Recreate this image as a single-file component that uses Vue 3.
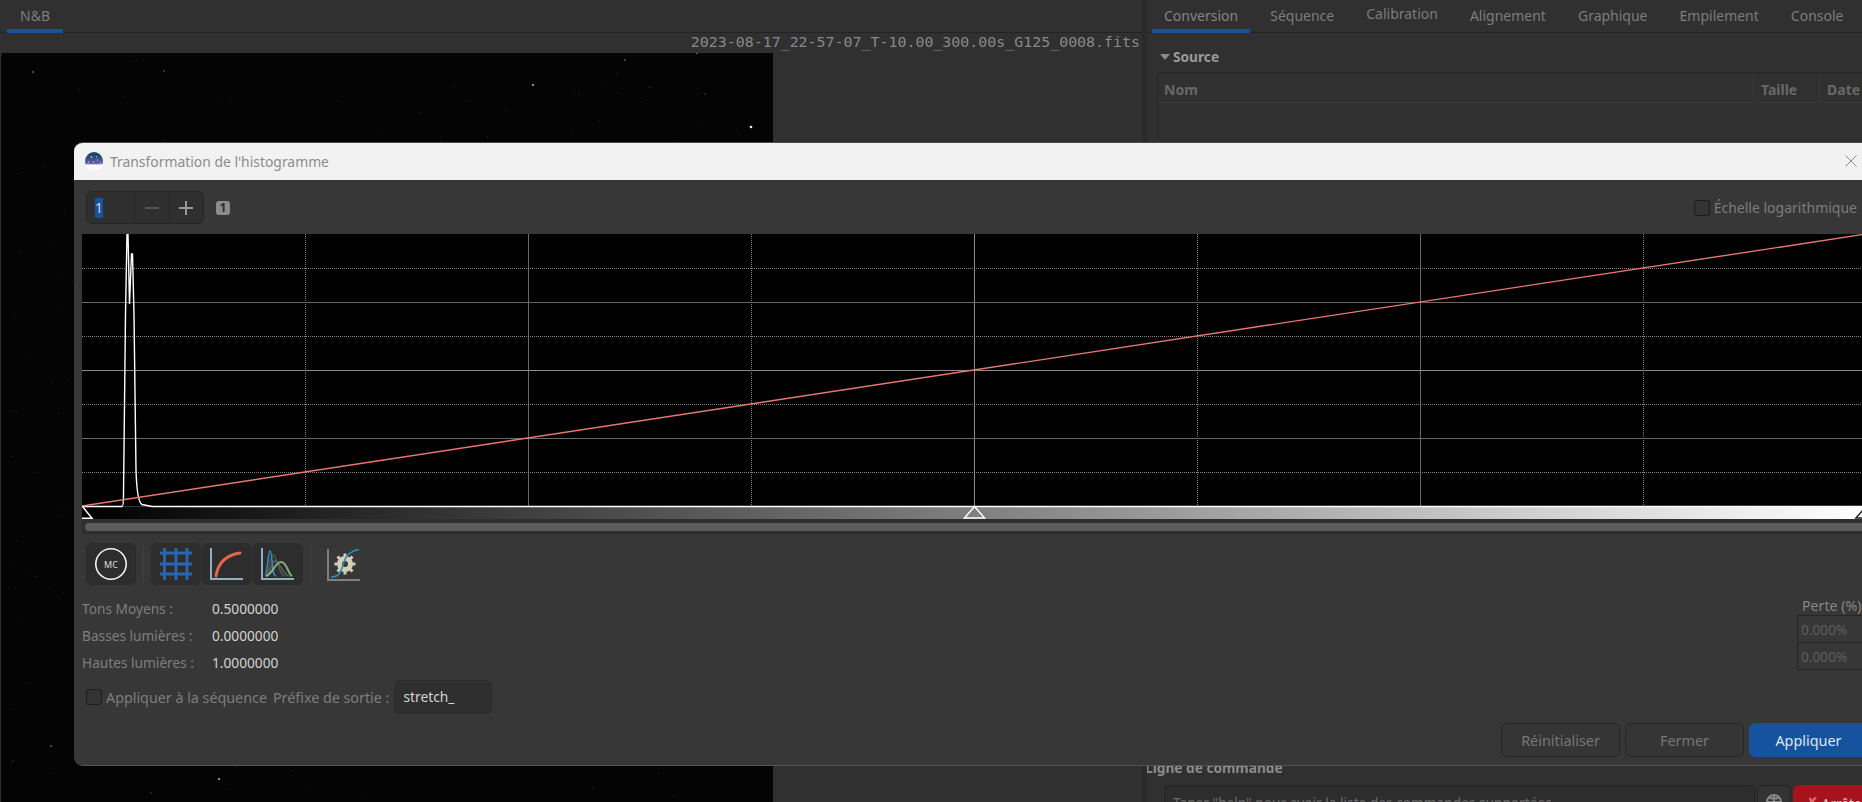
<script setup>
const tabs = ['Conversion', 'Séquence', 'Calibration', 'Alignement', 'Graphique', 'Empilement', 'Console']

const brightStars = [
  [750, 127, 1.3, '#eee'], [532, 85, 1, '#bbb'], [696, 53, 0.9, '#888'], [624, 60, 0.8, '#888'],
  [32, 72, 0.9, '#666'], [163, 71, 0.8, '#666'], [704, 94, 0.7, '#555'], [649, 87, 0.7, '#444'],
  [50, 746, 0.9, '#666'], [218, 779, 1, '#bbb'], [150, 793, 0.7, '#555'], [12, 761, 0.7, '#444']
]
let seed = 4217
const rnd = () => {
  seed = (seed * 16807) % 2147483647
  return seed / 2147483647
}
const faintStars = Array.from({ length: 300 }, () => ({
  x: Math.round(rnd() * 772),
  y: 53 + Math.round(rnd() * 749),
  g: 16 + Math.round(rnd() * 34)
}))

const vLines = [1, 2, 3, 4, 5, 6, 7].map((k) => ({ p: 223 * k + 0.5, solid: k % 2 === 0, mid: k === 4 }))
const hLines = [1, 2, 3, 4, 5, 6, 7].map((k) => ({ p: 34 * k + 0.5, solid: k % 2 === 0, mid: k === 4 }))
</script>

<template>
  <div class="desktop">
    <section class="left">
      <nav class="tabbar">
        <span class="tab tab-bw">N&amp;B</span>
      </nav>
      <div class="filename">2023-08-17_22-57-07_T-10.00_300.00s_G125_0008.fits</div>
      <div class="image">
        <svg class="stars" width="772" height="749" viewBox="0 53 772 749">
          <rect v-for="(s, i) in faintStars" :key="i" :x="s.x" :y="s.y" width="1" height="1" :fill="`rgb(${s.g},${s.g},${s.g})`" />
          <circle v-for="(s, i) in brightStars" :key="'b' + i" :cx="s[0]" :cy="s[1]" :r="s[2]" :fill="s[3]" />
        </svg>
      </div>
    </section>

    <div class="paned"></div>

    <section class="right">
      <nav class="tabbar right-tabs">
        <span v-for="(t, i) in tabs" :key="t" class="tab" :class="{ active: i === 0 }">{{ t }}</span>
      </nav>
      <div class="expander"><i class="arrow"></i>Source</div>
      <div class="table">
        <div class="thead">
          <span class="col-name">Nom</span>
          <span class="col-size">Taille</span>
          <span class="col-date">Date</span>
        </div>
      </div>
      <div class="cmd-title">Ligne de commande</div>
      <div class="cmd-row">
        <div class="cmd-entry">Taper "help" pour avoir la liste des commandes supportées</div>
        <div class="cmd-globe">
          <svg width="18" height="18" viewBox="0 0 18 18" fill="none" stroke="#888" stroke-width="2">
            <circle cx="9" cy="9" r="7" />
            <path d="M2 9h14M9 2v14M4 4.500c3 1.500 7 1.500 10 0" />
          </svg>
        </div>
        <div class="cmd-stop"><span class="stop-x">✗</span> Arrêter</div>
      </div>
    </section>

    <div class="dialog">
      <header class="titlebar">
        <svg class="logo" width="18" height="19" viewBox="0 0 18 19">
          <defs>
            <linearGradient id="logoGrad" x1="0" y1="0" x2="0" y2="1">
              <stop offset="0" stop-color="#163f5f" />
              <stop offset="0.35" stop-color="#33507f" />
              <stop offset="0.62" stop-color="#7465b5" />
              <stop offset="0.68" stop-color="#fff" />
              <stop offset="1" stop-color="#fafafa" />
            </linearGradient>
          </defs>
          <ellipse cx="9" cy="9.500" rx="9" ry="9.500" fill="url(#logoGrad)" />
          <path d="M6 4l1 2M3 10h1M8 10h1M12 8h1M15 11h1M11 5h1" stroke="#dfe4f5" stroke-width="1" />
        </svg>
        <span class="title">Transformation de l'histogramme</span>
        <svg class="close" width="12" height="12" viewBox="0 0 12 12" stroke="#8c8c8c" stroke-width="1">
          <path d="M0.500 0.500l11 11M11.500 0.500l-11 11" />
        </svg>
      </header>

      <div class="toolbar">
        <div class="spin">
          <div class="spin-value"><span class="selected">1</span></div>
          <div class="spin-btn">
            <svg width="14" height="14" viewBox="0 0 14 14" stroke="#565656" stroke-width="2"><path d="M0 7h14" /></svg>
          </div>
          <div class="spin-btn">
            <svg width="14" height="14" viewBox="0 0 14 14" stroke="#999" stroke-width="2"><path d="M0 7h14M7 0v14" /></svg>
          </div>
        </div>
        <span class="badge">1</span>
        <label class="check log-check"><i class="box"></i>Échelle logarithmique</label>
      </div>

      <div class="histogram">
        <svg class="plot" width="1784" height="285" viewBox="0 0 1784 285">
          <defs>
            <linearGradient id="ramp" x1="0" y1="0" x2="1" y2="0">
              <stop offset="0" stop-color="#000" />
              <stop offset="1" stop-color="#fff" />
            </linearGradient>
          </defs>
          <rect width="1784" height="272" fill="#000" />
          <rect y="273" width="1784" height="12" fill="url(#ramp)" />
          <g fill="none" stroke-width="1">
            <line v-for="v in vLines" :key="'v' + v.p" :x1="v.p" :x2="v.p" y1="0" y2="272"
              :stroke="v.mid ? '#8c8c8c' : v.solid ? '#686868' : '#808080'" :stroke-dasharray="v.solid ? null : '1 1'" />
            <line v-for="h in hLines" :key="'h' + h.p" x1="0" x2="1784" :y1="h.p" :y2="h.p"
              :stroke="h.mid ? '#8c8c8c' : h.solid ? '#686868' : '#808080'" :stroke-dasharray="h.solid ? null : '1 1'" />
          </g>
          <path d="M0 272.500H40Q41.500 272.500 41.500 260L43.500 80L45 0L46 0L47.500 70L49.500 20L50.500 20L52 81L54 236Q55 268 60 270.500L70 272.500H1784"
            fill="none" stroke="#fff" stroke-width="1.400" />
          <line x1="0" y1="272" x2="1784" y2="0" stroke="#e8786f" stroke-width="1.400" />
          <path d="M0.500 272.500L10 284.300H0" fill="none" stroke="#fff" stroke-width="1.500" />
          <path d="M892.500 272.500L882.500 284H902.500Z" fill="none" stroke="#fff" stroke-width="1.500" />
          <path d="M1784 272.500L1774 284H1794Z" fill="none" stroke="#222" stroke-width="1.500" />
        </svg>
        <div class="scroll"><div class="thumb"></div></div>
      </div>

      <div class="actions">
        <button class="tool">
          <svg width="34" height="34" viewBox="0 0 34 34">
            <circle cx="17" cy="17" r="15.200" fill="none" stroke="#f4f4f4" stroke-width="1.600" />
            <text x="17" y="20.500" text-anchor="middle" class="mc">MC</text>
          </svg>
        </button>
        <span class="sep"></span>
        <div class="group">
          <button class="tool">
            <svg width="34" height="34" viewBox="0 0 34 34" fill="none" stroke="#2a66b3" stroke-width="2.800">
              <path d="M5.500 1v32M17 1v32M28 1v32M1 6h32M1 17h32M1 27h32" />
            </svg>
          </button>
          <button class="tool">
            <svg width="34" height="34" viewBox="0 0 34 34" fill="none">
              <path d="M1 1v31h32" stroke="#8fb0c2" stroke-width="2" />
              <path d="M6 29C8 16 16 8 30 6" stroke="#e8674c" stroke-width="2.800" stroke-linecap="round" />
            </svg>
          </button>
          <button class="tool">
            <svg width="34" height="34" viewBox="0 0 34 34" fill="none">
              <path d="M1 1v31h32" stroke="#8fb0c2" stroke-width="2" />
              <path d="M5 29C8 29 8 8 12 8C16 8 18 29 24 29" stroke="#4c5a4e" stroke-width="1.400" />
              <path d="M5 29C9 29 10 14 14 14C19 14 22 29 28 29" stroke="#5c6a5a" stroke-width="1.400" />
              <path d="M4 29C6 29 7 4 9 4C12 4 10 29 15 29" stroke="#3f83c0" stroke-width="1.600" />
              <path d="M5 29C12 27 14 15 20 15C26 15 27 27 31 29" stroke="#84ac7c" stroke-width="2" />
            </svg>
          </button>
        </div>
        <span class="sep sep-two"></span>
        <svg class="gear" width="34" height="34" viewBox="0 0 34 34" fill="none">
          <path d="M1 1v31h32" stroke="#808080" stroke-width="2" />
          <circle cx="18" cy="16" r="5.500" stroke="#d6ceb8" stroke-width="5" />
          <path d="M18 5.500v3M18 23.500v3M7.500 16h3M25.500 16h3M10.500 8.500l2.200 2.200M25.500 8.500l-2.200 2.200M10.500 23.500l2.200-2.200M25.500 23.500l-2.200-2.200" stroke="#d6ceb8" stroke-width="3" />
          <path d="M4 29C14 29 14 22 17 14C19 7 23 3 32 1.500" stroke="#2b8fb8" stroke-width="1.600" />
        </svg>
      </div>

      <div class="stats">
        <div class="values">
          <span class="lbl">Tons Moyens :</span><span class="val">0.5000000</span>
          <span class="lbl">Basses lumières :</span><span class="val">0.0000000</span>
          <span class="lbl">Hautes lumières :</span><span class="val">1.0000000</span>
        </div>
        <div class="loss">
          <div class="loss-title">Perte (%)</div>
          <div class="loss-field">0.000%</div>
          <div class="loss-field">0.000%</div>
        </div>
      </div>

      <div class="sequence">
        <label class="check"><i class="box"></i>Appliquer à la séquence</label>
        <span class="prefix">Préfixe de sortie :</span>
        <div class="prefix-input">stretch_</div>
      </div>

      <div class="buttons">
        <button class="btn">Réinitialiser</button>
        <button class="btn">Fermer</button>
        <button class="btn primary">Appliquer</button>
      </div>
    </div>
  </div>
</template>

<style>
html, body { margin: 0; background: #303030; overflow: hidden; }
</style>

<style scoped>
.desktop {
  position: relative;
  display: flex;
  width: 1862px;
  height: 802px;
  overflow: hidden;
  background: #303030;
  color: #808080;
  font-family: "Noto Sans", "Open Sans", sans-serif;
  font-size: 13.700px;
}
.left { width: 1142px; flex: none; display: flex; flex-direction: column; }
.tabbar {
  height: 33px;
  box-sizing: border-box;
  flex: none;
  display: flex;
  border-bottom: 1px solid #232323;
}
.tab { height: 33px; box-sizing: border-box; padding-top: 6px; flex: none; color: #7c7c7c; font-size: 14px; }
.tab-bw { margin-left: 7px; width: 56px; text-align: center; border-bottom: 4px solid #15539e; }
.filename {
  height: 20px;
  flex: none;
  text-align: right;
  padding-right: 2px;
  font-family: "DejaVu Sans Mono", "Liberation Mono", monospace;
  font-size: 14.930px;
  line-height: 18px;
  color: #888;
  white-space: nowrap;
}
.image { flex: 1; margin-left: 1px; width: 772px; background: #040404; overflow: hidden; }
.stars { display: block; }
.paned { width: 5px; flex: none; background: #2a2a2a; }
.right { flex: 1; min-width: 0; overflow: hidden; display: flex; flex-direction: column; }
.right-tabs { padding-left: 5px; gap: 8px; }
.right-tabs .tab { padding-left: 12px; padding-right: 12px; white-space: nowrap; }
.right-tabs .tab.active { border-bottom: 4px solid #15539e; color: #848484; }
.right-tabs .tab:nth-child(3) { padding-top: 4px; }
.expander {
  height: 39px;
  flex: none;
  box-sizing: border-box;
  padding: 15px 0 0 13px;
  display: flex;
  align-items: flex-start;
  font-weight: 700;
  color: #9a9a9a;
  line-height: 18px;
}
.arrow {
  width: 0;
  height: 0;
  margin: 6px 3px 0 0;
  border-left: 5px solid transparent;
  border-right: 5px solid transparent;
  border-top: 6px solid #8a8a8a;
}
.table {
  margin-left: 10px;
  width: 760px;
  height: 688px;
  flex: none;
  box-sizing: border-box;
  border: 1px solid #262626;
}
.thead {
  position: relative;
  display: flex;
  height: 29px;
  box-sizing: content-box;
  border-bottom: 1px solid #383838;
  font-weight: 700;
  font-size: 14px;
  color: #686868;
  line-height: 34px;
}
.col-name { width: 595px; padding-left: 6px; box-sizing: border-box; }
.col-size { width: 66px; padding-left: 7px; box-sizing: border-box; border-left: 1px solid #383838; }
.col-date { width: 90px; padding-left: 7px; box-sizing: border-box; border-left: 1px solid #383838; }
.cmd-title {
  height: 26px;
  flex: none;
  font-weight: 700;
  color: #8c8c8c;
  line-height: 17px;
  margin-top: -1px;
  margin-left: -2px;
}
.cmd-row { display: flex; height: 34px; flex: none; padding-left: 17px; gap: 2px; }
.cmd-entry {
  width: 591px;
  box-sizing: border-box;
  flex: none;
  border: 1px solid #232323;
  border-radius: 6px;
  background: #2d2d2d;
  padding: 7px 8px;
  color: #6a6a6a;
  white-space: nowrap;
}
.cmd-globe {
  width: 34px;
  flex: none;
  box-sizing: border-box;
  border: 1px solid #232323;
  border-radius: 6px;
  background: #333;
  display: flex;
  align-items: center;
  justify-content: center;
}
.cmd-stop {
  width: 75px;
  flex: none;
  box-sizing: border-box;
  border-radius: 6px;
  background: #a5131d;
  color: #cfcfcf;
  padding: 7px 0 0 12px;
  white-space: nowrap;
}
.stop-x { color: #e06a6a; font-weight: 700; font-size: 16px; }

.dialog {
  position: absolute;
  left: 74px;
  top: 142px;
  width: 1800px;
  height: 624px;
  box-sizing: border-box;
  border-top: 1px solid #4c4c4c;
  border-bottom: 1px solid #555;
  border-radius: 9px 0 0 9px;
  background: #373737;
  overflow: hidden;
  display: flex;
  flex-direction: column;
}
.titlebar {
  height: 37px;
  flex: none;
  background: #f2f2f2;
  display: flex;
  align-items: center;
  padding-left: 11px;
  position: relative;
}
.title { margin-left: 7px; color: #8c8c8c; font-size: 13.900px; white-space: nowrap; }
.logo { flex: none; }
.close { position: absolute; left: 1771px; top: 12px; }
.toolbar {
  height: 54px;
  flex: none;
  box-sizing: border-box;
  padding: 11px 17px 10px 12px;
  display: flex;
  align-items: center;
}
.spin {
  display: flex;
  width: 118px;
  height: 33px;
  box-sizing: border-box;
  border: 1px solid #252525;
  border-radius: 6px;
  background: #2f2f2f;
}
.spin-value { width: 47px; flex: none; padding-left: 8px; box-sizing: border-box; display: flex; align-items: center; }
.selected { display: block; width: 8px; height: 20px; background: #15539e; color: #d0d8e0; line-height: 20px; text-align: center; }
.spin-btn {
  flex: 1;
  border-left: 1px solid #262626;
  display: flex;
  align-items: center;
  justify-content: center;
}
.badge {
  margin-left: 12px;
  width: 14px;
  height: 14px;
  border-radius: 3px;
  background: #8c8c8c;
  color: #2e2e2e;
  font-size: 12px;
  font-weight: 700;
  line-height: 14px;
  text-align: center;
}
.check { display: flex; align-items: center; white-space: nowrap; color: #7d7d7d; }
.box {
  display: block;
  width: 16px;
  height: 16px;
  box-sizing: border-box;
  flex: none;
  margin-right: 4px;
  border: 1px solid #1c1c1c;
  border-radius: 3px;
  background: #333;
}
.log-check { margin-left: auto; font-size: 14px; }
.histogram { margin-left: 8px; width: 1784px; flex: none; }
.plot { display: block; }
.scroll { height: 15px; box-sizing: border-box; padding: 4px 0 3px 3px; background: #2f2f2f; }
.thumb { height: 8px; background: #5c5c5c; border-radius: 4px 0 0 4px; }
.actions { height: 42px; margin-top: 9px; padding-left: 12px; flex: none; display: flex; align-items: center; }
.group { display: flex; gap: 1px; }
.tool {
  display: flex;
  align-items: center;
  justify-content: center;
  width: 50px;
  height: 42px;
  padding: 0;
  box-sizing: border-box;
  border: 1px solid #2a2a2a;
  border-radius: 6px;
  background: #2d2d2d;
}
.mc { font-family: "Noto Sans", sans-serif; font-size: 9px; fill: #ddd; }
.sep { width: 1px; height: 38px; background: #3f3f3f; margin: 0 7px; }
.sep-two { margin: 0 16px 0 7px; }
.gear { margin-top: 2px; }
.stats { height: 81px; margin-top: 11px; padding: 0 0 0 8px; flex: none; display: flex; justify-content: space-between; }
.values { display: grid; grid-template-columns: 130px auto; grid-auto-rows: 27px; align-items: center; justify-content: start; margin-top: -1px; }
.lbl { color: #7e7e7e; white-space: nowrap; }
.val { color: #d4d4d4; }
.loss { width: 77px; flex: none; }
.loss-title { height: 19px; margin-left: 5px; line-height: 19px; font-size: 14.200px; color: #868686; white-space: nowrap; }
.loss-field {
  height: 28px;
  box-sizing: border-box;
  border: 1px solid #252525;
  margin-bottom: -1px;
  padding-left: 3px;
  line-height: 27px;
  color: #5e5e5e;
}
.sequence { height: 34px; margin-top: 3px; padding-left: 12px; flex: none; display: flex; align-items: center; font-size: 14.300px; }
.prefix { margin-left: 6px; color: #7e7e7e; white-space: nowrap; }
.prefix-input {
  width: 98px;
  height: 34px;
  margin-left: 5px;
  box-sizing: border-box;
  border: 1px solid #2a2a2a;
  border-radius: 6px;
  background: #2f2f2f;
  color: #d4d4d4;
  padding-left: 8px;
  font-size: 13.800px;
  line-height: 31px;
}
.buttons {
  margin-top: 9px;
  flex: none;
  display: flex;
  justify-content: flex-end;
  gap: 5px;
  padding-right: 6px;
}
.btn {
  width: 119px;
  height: 34px;
  box-sizing: border-box;
  border: 1px solid #252525;
  border-radius: 6px;
  background: #353535;
  color: #777;
  font: inherit;
  font-size: 14.400px;
  padding: 0;
}
.primary { background: #15539e; border-color: #15539e; color: #dfe7f0; }
</style>
